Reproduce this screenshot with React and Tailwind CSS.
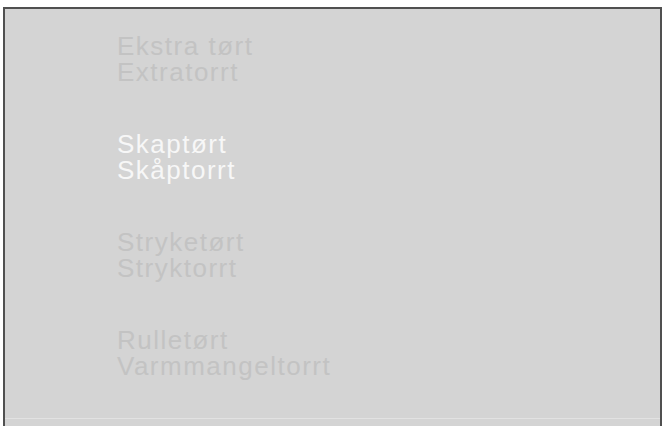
import React from 'react';

const modes = [
  { no: 'Ekstra tørt', sv: 'Extratorrt', active: false },
  { no: 'Skaptørt', sv: 'Skåptorrt', active: true },
  { no: 'Stryketørt', sv: 'Stryktorrt', active: false },
  { no: 'Rulletørt', sv: 'Varmmangeltorrt', active: false },
];

function App() {
  return (
    <div className="w-[665px] h-[426px] overflow-hidden bg-white pt-[7px] px-[3px] font-['Liberation_Sans',Arial,sans-serif]">
      {/* Display panel */}
      <div className="h-[440px] border-2 border-b-0 border-[#505050] bg-[#d4d4d4]">
        <div className="h-[410px] border-b border-[#e2e2e2] pl-[112px] pt-[24px] flex flex-col gap-[46px]">
          {modes.map((m) => (
            <div
              key={m.no}
              className={`text-[26px] leading-[26px] tracking-[1.5px] ${m.active ? 'text-[#f7f7f7]' : 'text-[#c3c3c3]'}`}
            >
              <div>{m.no}</div>
              <div>{m.sv}</div>
            </div>
          ))}
        </div>
      </div>
    </div>
  );
}

export default App;
